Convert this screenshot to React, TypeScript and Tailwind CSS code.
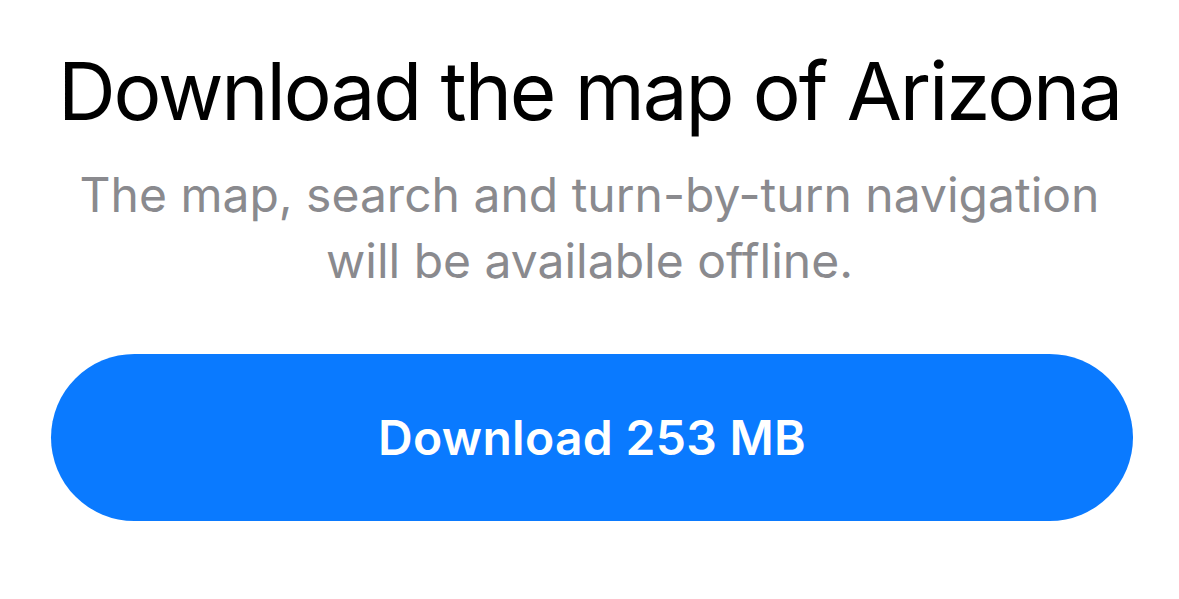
export default function App() {
  return (
    <div className="flex h-[599px] w-[1179px] flex-col items-center bg-white font-['Inter',sans-serif]">
      <h1 className="mt-[41px] text-[80px] leading-[100px] font-normal tracking-[-2.1px] text-black">
        Download the map of Arizona
      </h1>
      <p className="mt-[21px] text-center text-[48px] leading-[66px] text-[#8a8a8e]">
        The map, search and turn-by-turn navigation
        <br />
        will be available offline.
      </p>
      <button className="mt-[60px] ml-[5px] flex h-[167px] w-[1082px] items-center justify-center rounded-full bg-[#0a7aff] text-[48px] font-semibold tracking-[0.3px] text-white">
        Download 253 MB
      </button>
    </div>
  );
}
